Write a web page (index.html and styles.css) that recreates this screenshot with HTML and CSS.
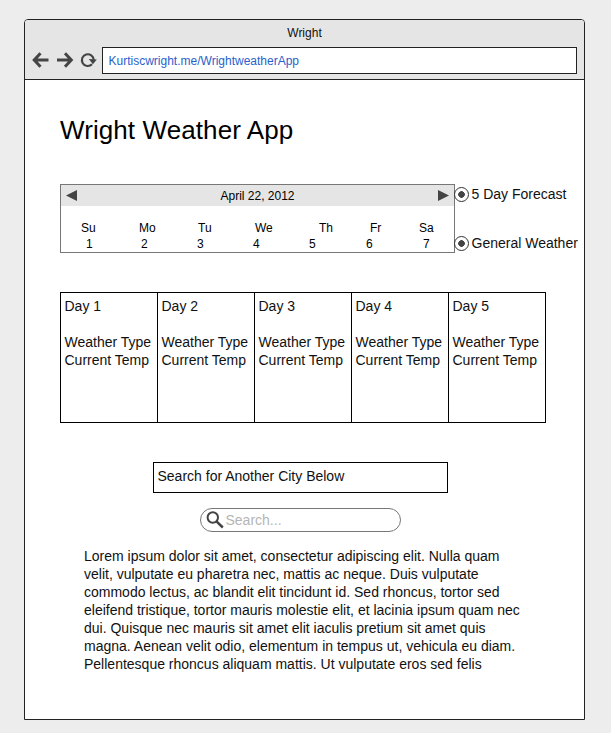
FILE: index.html
```html
<!DOCTYPE html>
<html lang="en">
<head>
<meta charset="utf-8">
<title>Wright</title>
<link rel="stylesheet" href="styles.css">
</head>
<body>
<div class="window">
  <header class="chrome">
    <div class="window-title">Wright</div>
    <div class="toolbar">
      <svg class="nav-icons" width="77" height="27" viewBox="0 0 77 27" fill="none" stroke="#444">
        <path d="M9.500 13H23.500M15.500 6.200L9.200 13L15.500 19.800" stroke-width="3"/>
        <path d="M32 13H46M40 6.200L46.300 13L40 19.800" stroke-width="3"/>
        <path d="M67 17.300A5.900 5.900 0 1 1 68.700 13" stroke-width="2.100"/>
        <path d="M63.800 12L71.800 12.500L67.900 17.300Z" fill="#444" stroke="none"/>
      </svg>
      <div class="address">Kurtiscwright.me/WrightweatherApp</div>
    </div>
  </header>
  <main class="page">
    <h1>Wright Weather App</h1>
    <section class="top-row">
      <div class="calendar">
        <div class="calendar-head">
          <svg width="11" height="11" viewBox="0 0 11 11"><path d="M0 5.500L11 0V11Z" fill="#444"/></svg>
          <span>April 22, 2012</span>
          <svg width="11" height="11" viewBox="0 0 11 11"><path d="M11 5.500L0 0V11Z" fill="#444"/></svg>
        </div>
        <div class="weekdays"><span>Su</span><span>Mo</span><span>Tu</span><span>We</span><span>Th</span><span>Fr</span><span>Sa</span></div>
        <div class="dates"><span>1</span><span>2</span><span>3</span><span>4</span><span>5</span><span>6</span><span>7</span></div>
      </div>
      <div class="options">
        <div class="option"><i class="radio"></i>5 Day Forecast</div>
        <div class="option"><i class="radio"></i>General Weather</div>
      </div>
    </section>
    <section class="forecast">
      <div class="day">Day 1<br><br>Weather Type<br>Current Temp</div>
      <div class="day">Day 2<br><br>Weather Type<br>Current Temp</div>
      <div class="day">Day 3<br><br>Weather Type<br>Current Temp</div>
      <div class="day">Day 4<br><br>Weather Type<br>Current Temp</div>
      <div class="day">Day 5<br><br>Weather Type<br>Current Temp</div>
    </section>
    <div class="search-label">Search for Another City Below</div>
    <div class="search">
      <svg width="18" height="18" viewBox="0 0 18 18" fill="none" stroke="#444"><circle cx="6.800" cy="6.500" r="5.200" stroke-width="2"/><path d="M10.500 10.300L16.800 16.500" stroke-width="2.500"/></svg>
      <span>Search...</span>
    </div>
    <p class="copy">Lorem ipsum dolor sit amet, consectetur adipiscing elit. Nulla quam<br>velit, vulputate eu pharetra nec, mattis ac neque. Duis vulputate<br>commodo lectus, ac blandit elit tincidunt id. Sed rhoncus, tortor sed<br>eleifend tristique, tortor mauris molestie elit, et lacinia ipsum quam nec<br>dui. Quisque nec mauris sit amet elit iaculis pretium sit amet quis<br>magna. Aenean velit odio, elementum in tempus ut, vehicula eu diam.<br>Pellentesque rhoncus aliquam mattis. Ut vulputate eros sed felis</p>
  </main>
</div>
</body>
</html>
```
FILE: styles.css
```css
* { box-sizing: border-box; }
body {
  margin: 0;
  padding: 19px 0 0 24px;
  height: 733px;
  overflow: hidden;
  background: #ededed;
  color: #111;
  font: 14px/18px "Liberation Sans", Arial, sans-serif;
  white-space: nowrap;
}
.window {
  width: 561px;
  height: 701px;
  border: 1px solid #222;
  border-radius: 4px 4px 0 0;
  background: #fff;
}
.chrome {
  height: 60px;
  border-bottom: 1px solid #222;
  border-radius: 3px 3px 0 0;
  background: #e5e5e5;
  font-size: 12px;
}
.window-title { height: 27px; line-height: 26px; text-align: center; }
.toolbar { display: flex; }
.nav-icons { flex: none; }
.address {
  width: 475px;
  height: 27px;
  padding-left: 5.5px;
  border: 1px solid #222;
  background: #fff;
  color: #2a5fcc;
  line-height: 26px;
}
.page { padding: 35px 0 0 35px; }
h1 { margin: 0; font-size: 26px; font-weight: 400; line-height: 30px; letter-spacing: 0.09px; color: #000; }
.top-row { display: flex; margin-top: 39px; }
.calendar { width: 395px; height: 69px; border: 1px solid #777; font-size: 12px; color: #000; }
.calendar-head {
  display: flex;
  align-items: center;
  justify-content: space-between;
  height: 21px;
  padding: 0 5px;
  background: #e5e5e5;
}
.calendar-head span { padding-top: 1px; }
.weekdays, .dates { display: grid; line-height: 16px; }
.weekdays { margin-top: 14px; padding-left: 20px; grid-template-columns: 58px 59px 57px 64px 51px 49px auto; }
.dates { padding-left: 25px; grid-template-columns: 55px 56px 56px 56px 57px 57px auto; }
.options { display: flex; flex-direction: column; gap: 31px; padding-top: 1px; margin-left: -1px; }
.option { display: flex; align-items: center; gap: 2.5px; height: 18px; }
.radio {
  width: 15px;
  height: 15px;
  border: 1px solid #333;
  border-radius: 50%;
  background: radial-gradient(circle, #444 3px, #fff 3.6px);
}
.forecast { display: flex; width: 486px; height: 131px; margin-top: 39px; border: 1px solid #000; }
.day { flex: none; width: 97px; padding: 4px 0 0 3.5px; border-right: 1px solid #000; }
.day:last-child { width: 96px; border-right: 0; }
.search-label {
  width: 295px;
  height: 31px;
  margin: 39px 0 0 93px;
  padding: 4px 3.5px;
  border: 1px solid #000;
}
.search {
  display: flex;
  align-items: center;
  gap: 1.5px;
  width: 201px;
  height: 24px;
  margin: 15px 0 0 140px;
  padding-left: 5px;
  border: 1px solid #777;
  border-radius: 12px;
  color: #b5b5b5;
}
.copy { margin: 15px 0 0 24px; }
```
